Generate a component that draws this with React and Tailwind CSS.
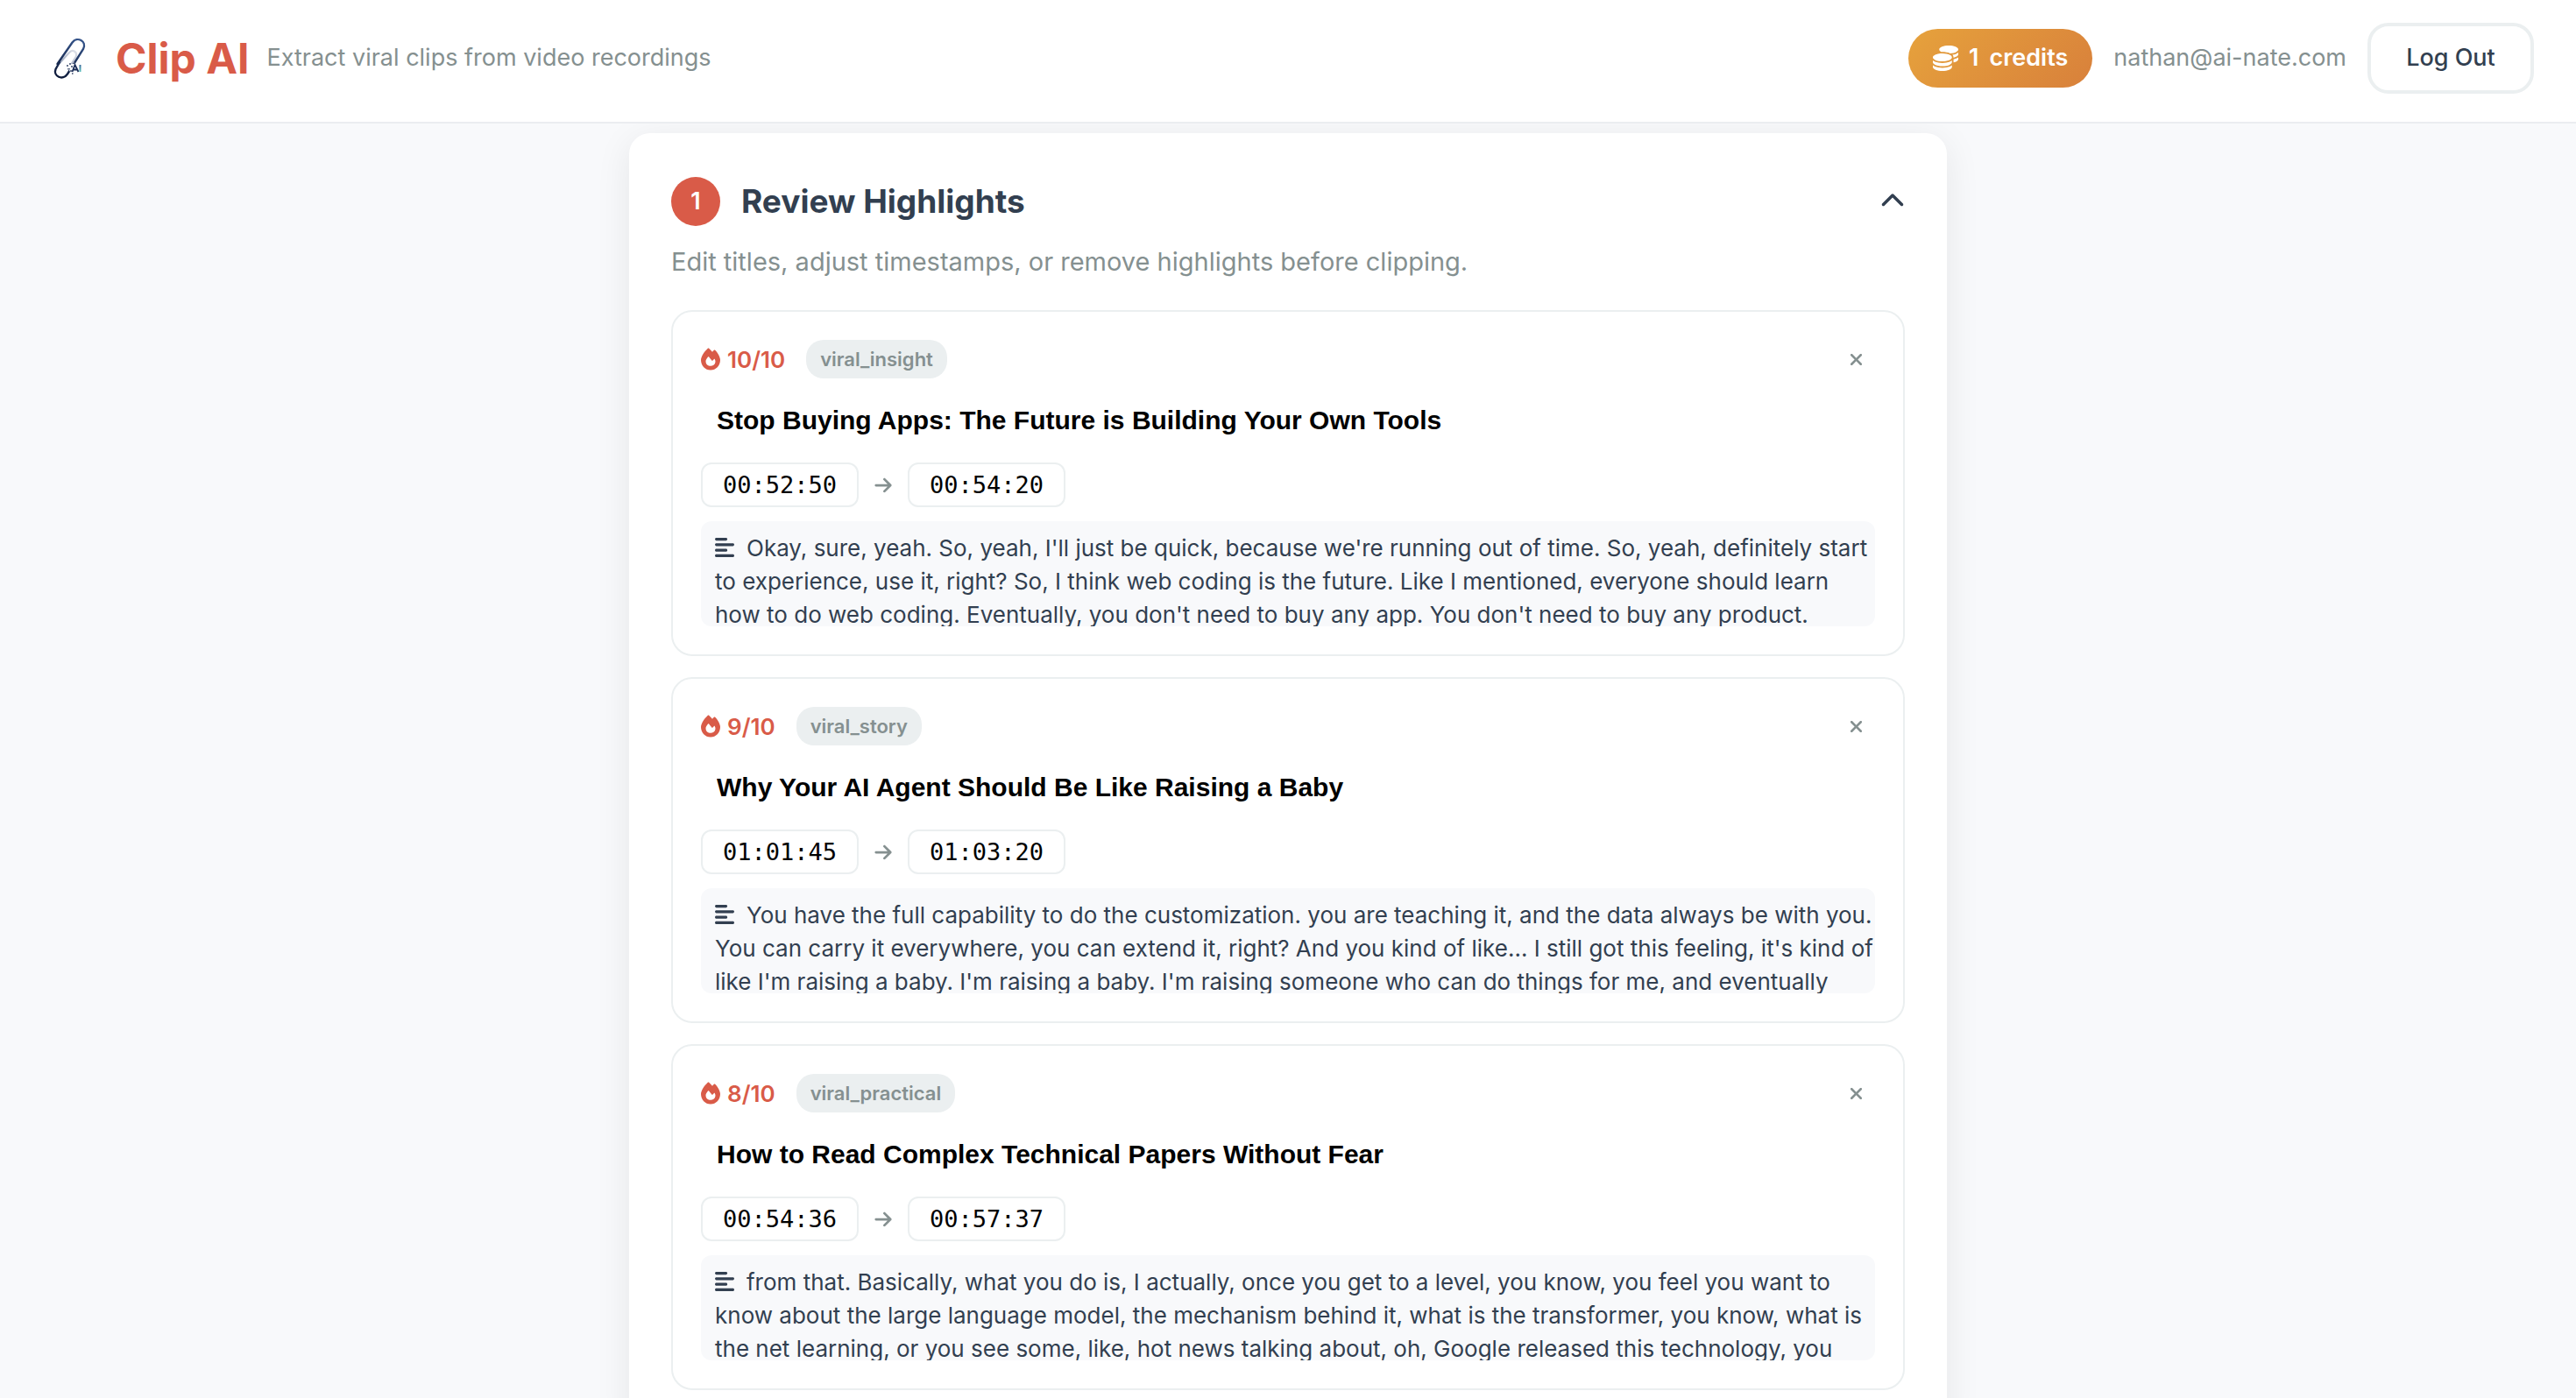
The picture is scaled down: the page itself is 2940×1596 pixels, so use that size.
import { useState } from 'react'
import {
  FaAlignLeft,
  FaArrowRight,
  FaChevronDown,
  FaChevronUp,
  FaCoins,
  FaFire,
  FaXmark,
} from 'react-icons/fa6'

const initialHighlights = [
  {
    id: 1,
    score: 10,
    type: 'viral_insight',
    title: 'Stop Buying Apps: The Future is Building Your Own Tools',
    start: '00:52:50',
    end: '00:54:20',
    transcript:
      "Okay, sure, yeah. So, yeah, I'll just be quick, because we're running out of time. So, yeah, definitely start to experience, use it, right? So, I think web coding is the future. Like I mentioned, everyone should learn how to do web coding. Eventually, you don't need to buy any app. You don't need to buy any product.",
  },
  {
    id: 2,
    score: 9,
    type: 'viral_story',
    title: 'Why Your AI Agent Should Be Like Raising a Baby',
    start: '01:01:45',
    end: '01:03:20',
    transcript:
      "You have the full capability to do the customization. you are teaching it, and the data always be with you. You can carry it everywhere, you can extend it, right? And you kind of like... I still got this feeling, it's kind of like I'm raising a baby. I'm raising a baby. I'm raising someone who can do things for me, and eventually",
  },
  {
    id: 3,
    score: 8,
    type: 'viral_practical',
    title: 'How to Read Complex Technical Papers Without Fear',
    start: '00:54:36',
    end: '00:57:37',
    transcript:
      'from that. Basically, what you do is, I actually, once you get to a level, you know, you feel you want to know about the large language model, the mechanism behind it, what is the transformer, you know, what is the net learning, or you see some, like, hot news talking about, oh, Google released this technology, you',
  },
]

const Logo = () => (
  <svg viewBox="0 0 64 64" className="h-16 w-16" fill="none" aria-hidden="true">
    <defs>
      <linearGradient id="clip" x1="40" y1="10" x2="24" y2="56" gradientUnits="userSpaceOnUse">
        <stop stopColor="#35548a" />
        <stop offset="1" stopColor="#0b1736" />
      </linearGradient>
      <linearGradient id="inner" x1="38" y1="22" x2="20" y2="42" gradientUnits="userSpaceOnUse">
        <stop stopColor="#dfe2e9" />
        <stop offset="1" stopColor="#8f9bb3" />
      </linearGradient>
      <linearGradient id="teal" x1="42" y1="40" x2="44" y2="47" gradientUnits="userSpaceOnUse">
        <stop stopColor="#3d6f9d" />
        <stop offset="1" stopColor="#62c7c1" />
      </linearGradient>
    </defs>
    <path d="M19 38 31 25C35 20 41 25 38.500 30L33 39" stroke="url(#inner)" strokeWidth="2.200" />
    <path
      d="M17.500 38 34.500 13.500C40 6 51.500 12 47 21L29 49.500C23.500 57.500 12.500 52 15.500 44L20 36"
      stroke="url(#clip)"
      strokeWidth="2.400"
      strokeLinecap="round"
    />
    <path d="M27 38h18v9h-13z" fill="#fff" />
    <path d="M28 39h2v2h-2zM31 37h2v2h-2zM29 43h3v1.500h-3zM33 40h2v2h-2zM32 45h2v2h-2zM36 36h1v2h-1zM34 48h1.500v2H34z" fill="#69758e" />
    <path d="m34.500 47 3-8 4 8M36 44.500h4" stroke="#1b2d57" strokeWidth="1.800" />
    <path d="M43.500 39v8" stroke="url(#teal)" strokeWidth="2" />
  </svg>
)

const Header = () => (
  <header className="relative z-10 flex items-center justify-between border-b-2 border-[#ebedf0] bg-white px-12 pt-[26px] pb-8">
    <div className="flex items-center gap-5">
      <Logo />
      <div className="flex items-center gap-5">
        <h1 className="text-[48px] leading-[72px] font-bold text-[#d95b48]">Clip AI</h1>
        <p className="text-[27px] text-[#859090]">Extract viral clips from video recordings</p>
      </div>
    </div>

    <div className="flex items-center gap-6">
      <span className="flex h-[67px] items-center gap-3 rounded-full bg-linear-135 from-[#e6a23c] to-[#d8803b] px-7 text-[27px] font-semibold text-white">
        <FaCoins className="text-[29px]" />
        <span className="flex gap-3">
          <span>1</span>
          <span>credits</span>
        </span>
      </span>
      <span className="text-[27px] text-[#859090]">nathan@ai-nate.com</span>
      <button
        type="button"
        className="h-[81px] min-w-[190px] rounded-[24px] border-4 border-[#ebeff0] px-8 text-[27px] font-medium text-[#323f50]"
      >
        Log Out
      </button>
    </div>
  </header>
)

const TimeInput = ({ label, value, onChange }) => (
  <input
    type="text"
    aria-label={label}
    value={value}
    onChange={onChange}
    className="h-[51px] w-[180px] rounded-xl border-2 border-[#ebeff0] bg-white text-center font-['DejaVu_Sans_Mono',monospace] text-[27px] text-black"
  />
)

const HighlightCard = ({ item, onChange, onRemove }) => (
  <article className="rounded-[24px] border-2 border-[#ebeff0] p-8">
    <div className="flex items-center justify-between">
      <div className="flex h-11 items-center gap-6">
        <span className="flex items-center gap-2 text-[26px] font-semibold text-[#d95b48]">
          <FaFire className="w-[22px]" />
          {item.score}/10
        </span>
        <span className="rounded-[20px] bg-[#ebeff0] px-4 text-[22px] leading-[44px] font-semibold text-[#859090]">
          {item.type}
        </span>
      </div>
      <button
        type="button"
        aria-label="Remove highlight"
        onClick={onRemove}
        className="flex h-11 w-11 items-center justify-center text-[21px] text-[#859090]"
      >
        <FaXmark />
      </button>
    </div>

    <input
      type="text"
      aria-label="Title"
      value={item.title}
      onChange={(e) => onChange({ title: e.target.value })}
      className="my-3 block h-[72px] w-full rounded-xl border-2 border-transparent px-4 font-['Liberation_Sans',sans-serif] text-[30px] font-bold text-black"
    />

    <div className="flex items-center gap-4">
      <TimeInput label="Start time" value={item.start} onChange={(e) => onChange({ start: e.target.value })} />
      <span className="flex w-6 justify-center text-[22px] text-[#859090]">
        <FaArrowRight />
      </span>
      <TimeInput label="End time" value={item.end} onChange={(e) => onChange({ end: e.target.value })} />
    </div>

    <div className="mt-4 h-[120px] overflow-hidden rounded-xl bg-[#f8f9fb] py-3 pl-4 text-[26px] leading-[38px] text-[#323f50]">
      <FaAlignLeft className="mr-[14px] inline-block w-[22px] align-[-3px]" />
      {item.transcript}
    </div>
  </article>
)

const App = () => {
  const [open, setOpen] = useState(true)
  const [highlights, setHighlights] = useState(initialHighlights)

  const updateHighlight = (id, changes) =>
    setHighlights((list) => list.map((item) => (item.id === id ? { ...item, ...changes } : item)))

  const removeHighlight = (id) => setHighlights((list) => list.filter((item) => item.id !== id))

  return (
    <div className="h-screen overflow-hidden bg-[#f8f9fb] font-['Inter',sans-serif]">
      <Header />

      <main className="mx-auto max-w-[1504px] pt-[11px]">
        <section className="rounded-[24px] bg-white p-12 shadow-[0_8px_40px_rgba(0,0,0,0.08)]">
          <button
            type="button"
            aria-expanded={open}
            onClick={() => setOpen(!open)}
            className="flex w-full items-center justify-between text-[#323f50]"
          >
            <span className="flex items-center gap-6">
              <span className="flex h-14 w-14 items-center justify-center rounded-full bg-[#d95b48] text-[27px] font-semibold text-white">
                1
              </span>
              <span className="text-[37px] leading-[60px] font-bold">Review Highlights</span>
            </span>
            {open ? <FaChevronUp className="text-[28px]" /> : <FaChevronDown className="text-[28px]" />}
          </button>

          {open && (
            <>
              <p className="mt-4 text-[29px] leading-[46px] text-[#859090]">
                Edit titles, adjust timestamps, or remove highlights before clipping.
              </p>
              <div className="mt-8 flex flex-col gap-6">
                {highlights.map((item) => (
                  <HighlightCard
                    key={item.id}
                    item={item}
                    onChange={(changes) => updateHighlight(item.id, changes)}
                    onRemove={() => removeHighlight(item.id)}
                  />
                ))}
              </div>
            </>
          )}
        </section>
      </main>
    </div>
  )
}

export default App
